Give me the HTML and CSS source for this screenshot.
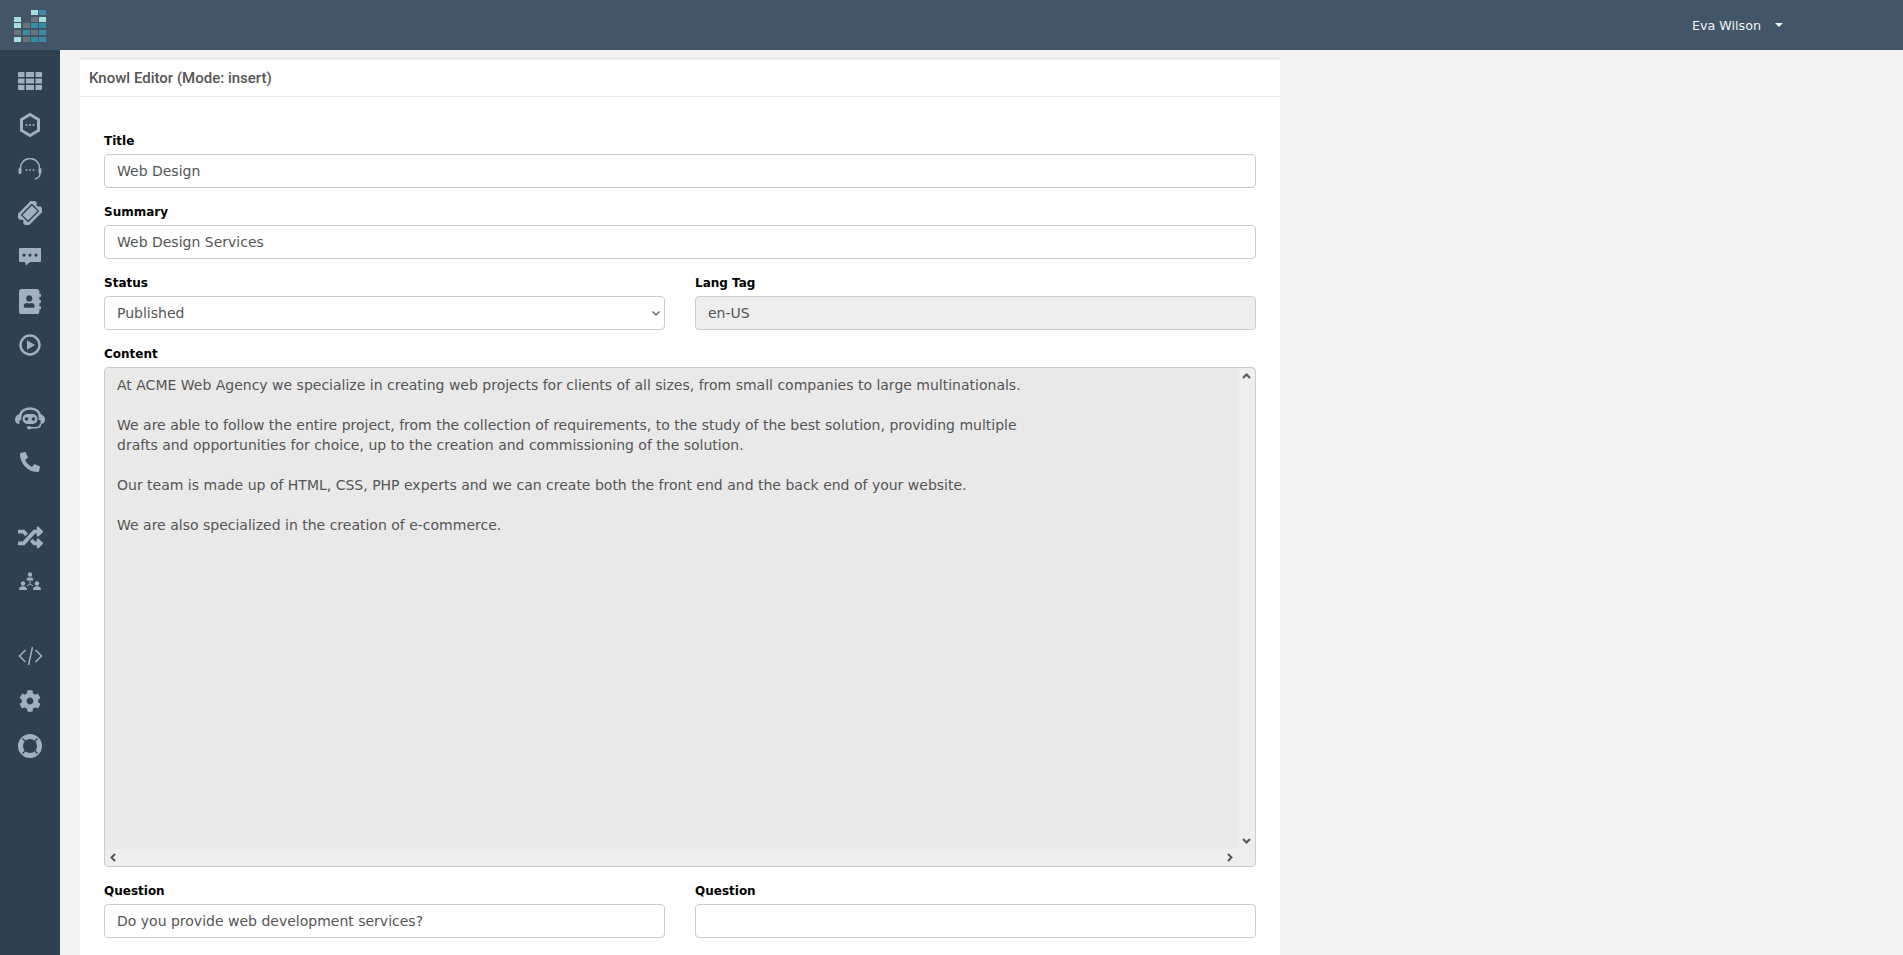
FILE: index.html
```html
<!DOCTYPE html>
<html lang="en">
<head>
  <meta charset="UTF-8">
  <title>Knowl Editor</title>
  <link rel="stylesheet" href="styles.css">
</head>
<body>
  <header class="topbar">
    <div class="logo">
      <svg width="60" height="50" viewBox="0 0 60 50">
        <g class="logo-light">
          <rect x="31" y="10" width="7" height="5"/><rect x="14" y="17" width="7" height="5"/><rect x="39" y="17" width="7" height="5"/>
          <rect x="14" y="23" width="7" height="5"/><rect x="14" y="37" width="7" height="5"/>
        </g>
        <g class="logo-teal">
          <rect x="39" y="10" width="7" height="5"/><rect x="31" y="23" width="7" height="5"/><rect x="39" y="23" width="7" height="5"/>
          <rect x="23" y="30" width="7" height="5"/><rect x="39" y="30" width="7" height="5"/><rect x="31" y="37" width="7" height="5"/><rect x="39" y="37" width="7" height="5"/>
        </g>
        <g class="logo-grey">
          <rect x="31" y="17" width="7" height="5"/><rect x="23" y="23" width="7" height="5"/><rect x="14" y="30" width="7" height="5"/>
          <rect x="31" y="30" width="7" height="5"/><rect x="23" y="37" width="7" height="5"/>
        </g>
      </svg>
    </div>
    <div class="user-menu">
      <span>Eva Wilson</span>
      <span class="caret"></span>
    </div>
  </header>

  <div class="layout">
    <nav class="sidebar">
      <div class="nav-group nav-first">
        <a class="nav-item"><svg width="24" height="18" viewBox="0 0 24 18"><path d="M0 1a1 1 0 0 1 1-1h5.500v5H0zM8 0h8v5H8zM17.500 0H23a1 1 0 0 1 1 1v4h-6.500zM0 6.500h6.500v5H0zM8 6.500h8v5H8zM17.500 6.500H24v5h-6.500zM0 13h6.500v5H1a1 1 0 0 1-1-1zM8 13h8v5H8zM17.500 13H24v4a1 1 0 0 1-1 1h-5.500z"/></svg></a>
        <a class="nav-item"><svg width="20" height="24" viewBox="0 0 20 24"><path d="M10 1.500 18.500 6.500v11L10 22.500 1.500 17.500v-11z" fill="none" stroke-width="3" class="stroked"/><circle cx="6.500" cy="12" r="1"/><circle cx="10" cy="12" r="1"/><circle cx="13.500" cy="12" r="1"/></svg></a>
        <a class="nav-item"><svg width="24" height="22" viewBox="0 0 24 22"><path d="M2.500 11V10a9.500 9.500 0 0 1 19 0v1" fill="none" stroke-width="1.600" class="stroked"/><rect x="0.500" y="10" width="3" height="6" rx="1.500"/><rect x="20.500" y="10" width="3" height="6" rx="1.500"/><path d="M22 16c0 3-2 4-5 5" fill="none" stroke-width="1.400" class="stroked"/><circle cx="8.500" cy="12" r=".9"/><circle cx="12" cy="12" r=".9"/><circle cx="15.500" cy="12" r=".9"/></svg></a>
        <a class="nav-item"><svg width="24" height="24" viewBox="0 0 576 576"><path transform="rotate(-45 288 288) translate(0 32)" d="M128 160h320v192H128V160zm400 96c0 26.510 21.490 48 48 48v96c0 26.510-21.490 48-48 48H48c-26.510 0-48-21.490-48-48v-96c26.510 0 48-21.490 48-48s-21.490-48-48-48v-96c0-26.510 21.490-48 48-48h480c26.510 0 48 21.490 48 48v96c-26.510 0-48 21.490-48 48zm-48-104c0-13.255-10.745-24-24-24H120c-13.255 0-24 10.745-24 24v208c0 13.255 10.745 24 24 24h336c13.255 0 24-10.745 24-24V152z"/></svg></a>
        <a class="nav-item"><svg width="22" height="18" viewBox="0 0 22 18"><path fill-rule="evenodd" d="M1 0h20a1 1 0 0 1 1 1v12a1 1 0 0 1-1 1H11l-4 3.500-1-3.500H1a1 1 0 0 1-1-1V1a1 1 0 0 1 1-1zM5 5.500a1.600 1.600 0 1 0 0 3.200 1.600 1.600 0 0 0 0-3.200zM11 5.500a1.600 1.600 0 1 0 0 3.200 1.600 1.600 0 0 0 0-3.200zM17 5.500a1.600 1.600 0 1 0 0 3.200 1.600 1.600 0 0 0 0-3.200z"/></svg></a>
        <a class="nav-item"><svg width="22" height="25" viewBox="0 0 448 512"><path d="M436 160c6.600 0 12-5.400 12-12v-40c0-6.600-5.400-12-12-12h-20V48c0-26.500-21.500-48-48-48H48C21.500 0 0 21.500 0 48v416c0 26.500 21.500 48 48 48h320c26.500 0 48-21.500 48-48v-48h20c6.600 0 12-5.400 12-12v-40c0-6.600-5.400-12-12-12h-20v-64h20c6.600 0 12-5.400 12-12v-40c0-6.600-5.400-12-12-12h-20v-64h20zm-228-32c35.300 0 64 28.700 64 64s-28.700 64-64 64-64-28.700-64-64 28.700-64 64-64zm112 236.800c0 10.600-10 19.200-22.400 19.200H118.400C106 384 96 375.400 96 364.800v-19.200c0-31.800 30.100-57.600 67.200-57.600h5c12.300 5.100 25.700 8 39.800 8s27.600-2.900 39.800-8h5c37.100 0 67.200 25.800 67.200 57.600v19.200z"/></svg></a>
        <a class="nav-item"><svg width="22" height="22" viewBox="0 0 22 22"><circle cx="11" cy="11" r="9.500" fill="none" stroke-width="2.400" class="stroked"/><path d="M8 6.200v9.600L16 11z"/></svg></a>
      </div>
      <div class="nav-group nav-second">
        <a class="nav-item"><svg width="30" height="23" viewBox="0 0 30 23"><path d="M5 13V10.500C5 4.500 9.500 1.500 15 1.500S25 4.500 25 10.500V13" fill="none" stroke-width="2.600" class="stroked"/><path d="M4.500 7.500V17C2 17 0 15.500 0 12.500S2 7.500 4.500 7.500zM25.500 7.500V17C28 17 30 15.500 30 12.500S28 7.500 25.500 7.500z"/><path d="M25.500 17c0 2.500-2 3.800-5 3.800h-6" fill="none" stroke-width="1.600" class="stroked"/><rect x="12" y="19.300" width="4.500" height="3" rx="1.500"/><rect x="7.500" y="7" width="15" height="10" rx="5"/><circle class="nav-eye" cx="11.500" cy="12" r="1.800"/><circle class="nav-eye" cx="18.500" cy="12" r="1.800"/></svg></a>
        <a class="nav-item"><svg width="20" height="20" viewBox="0 0 512 512"><path transform="matrix(-1 0 0 1 512 0)" d="M493.400 24.600l-104-24c-11.300-2.600-22.900 3.300-27.500 13.900l-48 112c-4.200 9.800-1.400 21.300 6.900 28l60.600 49.600c-36 76.700-98.900 140.500-177.200 177.200l-49.600-60.600c-6.800-8.300-18.200-11.100-28-6.900l-112 48C3.900 366.500-2 378.100.6 389.400l24 104C27.100 504.200 36.700 512 48 512c256.100 0 464-207.500 464-464 0-11.200-7.700-20.900-18.600-23.400z"/></svg></a>
      </div>
      <div class="nav-group">
        <a class="nav-item"><svg width="25" height="25" viewBox="0 0 512 512"><path d="M504.971 359.029c9.373 9.373 9.373 24.569 0 33.941l-80 79.984c-15.010 15.010-40.971 4.490-40.971-16.971V416h-58.785a12.004 12.004 0 0 1-8.773-3.812l-70.556-75.596 53.333-57.143L352 336h32v-39.981c0-21.438 25.943-31.998 40.971-16.971l80 79.981zM12 176h84l52.781 56.551 53.333-57.143-70.556-75.596A11.999 11.999 0 0 0 122.785 96H12c-6.627 0-12 5.373-12 12v56c0 6.627 5.373 12 12 12zm372 0v39.984c0 21.460 25.961 31.980 40.971 16.971l80-79.984c9.373-9.373 9.373-24.569 0-33.941l-80-79.981C409.943 24.021 384 34.582 384 56.019V96h-58.785a12.004 12.004 0 0 0-8.773 3.812L96 336H12c-6.627 0-12 5.373-12 12v56c0 6.627 5.373 12 12 12h110.785c3.326 0 6.503-1.381 8.773-3.812L352 176h32z"/></svg></a>
        <a class="nav-item"><svg width="22" height="18" viewBox="0 0 22 18"><circle cx="11" cy="2.500" r="2.200"/><path d="M7.500 8.500C7.500 6 9 5.500 11 5.500S14.500 6 14.500 8.500z"/><circle cx="4" cy="11.500" r="2.200"/><path d="M0 18c0-3 2-3.800 4-3.800S8 15 8 18z"/><circle cx="18" cy="11.500" r="2.200"/><path d="M14 18c0-3 2-3.800 4-3.800S22 15 22 18z"/><path d="M11 8.500V12M11 12 8 14M11 12l3 2" fill="none" stroke-width="1" class="stroked"/></svg></a>
      </div>
      <div class="nav-group nav-wide">
        <a class="nav-item"><svg width="25" height="20" viewBox="0 0 25 20"><path d="M7.500 4 1.500 10l6 6M17.500 4l6 6-6 6M14.500 1 10.500 19" fill="none" stroke-width="1.500" class="stroked"/></svg></a>
        <a class="nav-item"><svg width="22" height="22" viewBox="0 0 512 512"><path d="M487.400 315.700l-42.600-24.600c4.300-23.200 4.300-47 0-70.200l42.600-24.600c4.900-2.800 7.100-8.600 5.500-14-11.100-35.600-30-67.800-54.700-94.600-3.800-4.100-10-5.100-14.800-2.300L380.800 110c-17.900-15.400-38.500-27.300-60.800-35.100V25.800c0-5.600-3.900-10.500-9.400-11.700-36.700-8.200-74.300-7.800-109.200 0-5.500 1.200-9.400 6.100-9.400 11.700V75c-22.200 7.900-42.800 19.800-60.800 35.100L88.700 85.500c-4.900-2.800-11-1.900-14.800 2.300-24.700 26.700-43.600 58.900-54.700 94.600-1.700 5.400.6 11.200 5.500 14L67.300 221c-4.300 23.200-4.300 47 0 70.200l-42.600 24.600c-4.900 2.800-7.100 8.600-5.500 14 11.100 35.600 30 67.800 54.700 94.600 3.800 4.100 10 5.100 14.800 2.300l42.600-24.600c17.900 15.400 38.500 27.300 60.800 35.100v49.200c0 5.600 3.900 10.500 9.400 11.700 36.700 8.200 74.300 7.800 109.200 0 5.500-1.200 9.400-6.100 9.400-11.700v-49.200c22.200-7.900 42.800-19.800 60.800-35.100l42.600 24.600c4.900 2.800 11 1.900 14.800-2.300 24.700-26.700 43.600-58.900 54.700-94.600 1.500-5.500-.7-11.300-5.600-14.100zM256 336c-44.100 0-80-35.900-80-80s35.900-80 80-80 80 35.900 80 80-35.900 80-80 80z"/></svg></a>
        <a class="nav-item"><svg width="24" height="24" viewBox="0 0 24 24"><circle cx="12" cy="12" r="9.500" fill="none" stroke-width="5" class="stroked"/><path class="nav-cut" d="M4.500 4.500l4 4M19.500 4.500l-4 4M4.500 19.500l4-4M19.500 19.500l-4-4" fill="none" stroke-width="1.400"/></svg></a>
      </div>
    </nav>

    <main class="content">
      <section class="panel">
        <div class="panel-title">Knowl Editor (Mode: insert)</div>
        <form class="panel-body">
          <div class="field">
            <label>Title</label>
            <input class="control" type="text" value="Web Design">
          </div>
          <div class="field">
            <label>Summary</label>
            <input class="control" type="text" value="Web Design Services">
          </div>
          <div class="row">
            <div class="field">
              <label>Status</label>
              <div class="select-wrap">
                <select class="control">
                  <option>Published</option>
                </select>
                <svg class="select-arrow" width="8" height="5" viewBox="0 0 8 5"><path d="M.5.500 4 4 7.500.500" fill="none" stroke="#555" stroke-width="1.200"/></svg>
              </div>
            </div>
            <div class="field">
              <label>Lang Tag</label>
              <input class="control" type="text" value="en-US" disabled>
            </div>
          </div>
          <div class="field">
            <label>Content</label>
            <div class="editor">
              <textarea class="editor-text" wrap="off" disabled>At ACME Web Agency we specialize in creating web projects for clients of all sizes, from small companies to large multinationals.

We are able to follow the entire project, from the collection of requirements, to the study of the best solution, providing multiple
drafts and opportunities for choice, up to the creation and commissioning of the solution.

Our team is made up of HTML, CSS, PHP experts and we can create both the front end and the back end of your website.

We are also specialized in the creation of e-commerce.</textarea>
              <div class="scroll-y">
                <svg width="9" height="6" viewBox="0 0 9 6"><path d="M1 5 4.500 1.500 8 5"/></svg>
                <svg width="9" height="6" viewBox="0 0 9 6"><path d="M1 1 4.500 4.500 8 1"/></svg>
              </div>
              <div class="scroll-x">
                <svg width="6" height="9" viewBox="0 0 6 9"><path d="M5 1 1.500 4.500 5 8"/></svg>
                <svg width="6" height="9" viewBox="0 0 6 9"><path d="M1 1 4.500 4.500 1 8"/></svg>
              </div>
            </div>
          </div>
          <div class="row">
            <div class="field">
              <label>Question</label>
              <input class="control" type="text" value="Do you provide web development services?">
            </div>
            <div class="field">
              <label>Question</label>
              <input class="control" type="text">
            </div>
          </div>
        </form>
      </section>
    </main>
  </div>
</body>
</html>
```
FILE: styles.css
```css
html, body {
  height: 100%;
}
body {
  margin: 0;
  font-family: "DejaVu Sans", Verdana, sans-serif;
  font-size: 14px;
  color: #555;
  background-color: #f3f3f3;
  overflow: hidden;
}
.topbar {
  height: 50px;
  background-color: #435669;
  display: flex;
  justify-content: space-between;
  align-items: center;
}
.logo {
  width: 60px;
  height: 50px;
}
.logo svg {
  display: block;
}
.logo-light { fill: #a5dedb; }
.logo-teal { fill: #3a8ca5; }
.logo-grey { fill: #6c7279; }
.user-menu {
  display: flex;
  align-items: center;
  gap: 14px;
  padding-right: 120px;
  font-size: 12.7px;
  color: #f3f3f3;
}
.caret {
  width: 0;
  height: 0;
  border-top: 4px solid #f3f3f3;
  border-left: 4px solid transparent;
  border-right: 4px solid transparent;
}
.layout {
  display: flex;
  height: calc(100% - 50px);
}
.sidebar {
  width: 60px;
  flex: none;
  padding-top: 9px;
  background-color: #2f4050;
}
.nav-group {
  margin-bottom: 30px;
}
.nav-first {
  margin-bottom: 29px;
}
.nav-second {
  margin-bottom: 31px;
}
.nav-item {
  height: 44px;
  display: flex;
  align-items: center;
  justify-content: center;
}
.nav-wide .nav-item {
  height: 45px;
}
.nav-item svg {
  fill: #a3afc0;
}
.nav-item .stroked {
  stroke: #a3afc0;
}
.nav-item .nav-eye {
  fill: #2f4050;
}
.nav-cut {
  stroke: #2f4050;
}
.content {
  flex: 1;
  padding: 7px 20px 0;
  overflow: hidden;
}
.panel {
  width: 1200px;
  background-color: #fff;
  border-top: 3px solid #e7eaec;
}
.panel-title {
  height: 36px;
  padding: 0 9px;
  line-height: 36px;
  font-family: Roboto, sans-serif;
  font-size: 15px;
  font-weight: 500;
  border-bottom: 1px solid #e7eaec;
}
.panel-body {
  padding: 35px 24px 20px;
}
.row {
  display: grid;
  grid-template-columns: 1fr 1fr;
  gap: 30px;
}
.field {
  margin-bottom: 15px;
}
.field label {
  display: block;
  height: 17px;
  margin-bottom: 5px;
  padding-top: 1px;
  box-sizing: border-box;
  line-height: 17px;
  font-size: 12px;
  font-weight: bold;
  color: #000;
}
.control {
  display: block;
  box-sizing: border-box;
  width: 100%;
  height: 34px;
  padding: 6px 12px;
  font-family: "DejaVu Sans", Verdana, sans-serif;
  font-size: 14px;
  color: #555;
  background-color: #fff;
  border: 1px solid #ccc;
  border-radius: 4px;
  outline: none;
}
select.control {
  appearance: none;
}
.control:disabled {
  background-color: #eee;
}
.select-wrap {
  position: relative;
}
.select-arrow {
  position: absolute;
  top: 15px;
  right: 5px;
}
.editor {
  box-sizing: border-box;
  height: 500px;
  display: grid;
  grid-template-columns: 1fr 17px;
  grid-template-rows: 1fr 17px;
  background-color: #eee;
  border: 1px solid #ccc;
  border-radius: 4px;
  overflow: hidden;
}
.editor-text {
  display: block;
  box-sizing: border-box;
  width: 100%;
  height: 100%;
  padding: 7px 12px;
  font-family: "DejaVu Sans", Verdana, sans-serif;
  font-size: 14px;
  line-height: 20px;
  color: #555;
  background-color: #e9e9e9;
  border: none;
  outline: none;
  resize: none;
  overflow: hidden;
}
.scroll-y {
  display: flex;
  flex-direction: column;
  justify-content: space-between;
  align-items: center;
  padding: 5px 0;
}
.scroll-x {
  grid-column: 1 / 2;
  display: flex;
  justify-content: space-between;
  align-items: center;
  padding: 0 5px;
}
.scroll-y svg, .scroll-x svg {
  fill: none;
  stroke: #555;
  stroke-width: 2;
}
```
